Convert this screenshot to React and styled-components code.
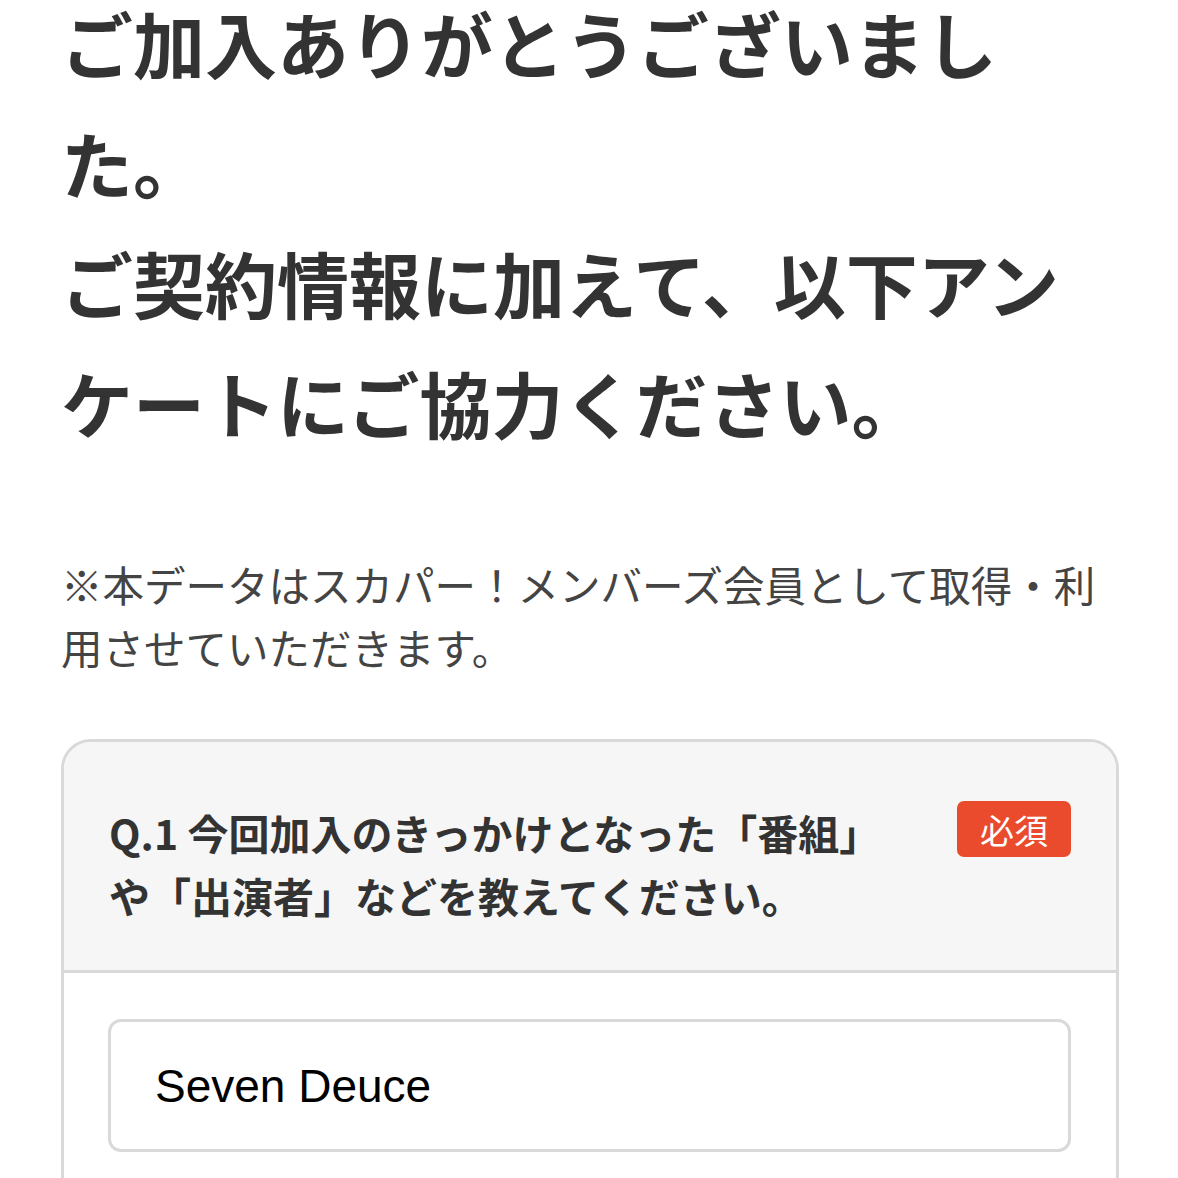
import React from "react";
import styled, { createGlobalStyle } from "styled-components";

const GlobalStyle = createGlobalStyle`
  html, body {
    margin: 0;
    padding: 0;
    background: #fff;
  }
  body {
    font-family: "Noto Sans CJK JP", "Noto Sans", sans-serif;
    color: #333;
    overflow: hidden;
    text-spacing-trim: space-all;
  }
`;

const Page = styled.main`
  width: 1058px;
  padding: 0 59px 0 61px;
`;

const Title = styled.h1`
  margin: -18px 0 0;
  font-size: 72px;
  line-height: 120px;
  font-weight: 700;
  color: #333;
  line-break: strict;
`;

const Note = styled.p`
  margin: 91px 0 0;
  font-size: 41.5px;
  line-height: 63px;
  font-weight: 400;
  color: #444;
`;

const Card = styled.section`
  margin-top: 60px;
  border: 3px solid #d9d9d9;
  border-radius: 30px;
  overflow: hidden;
  background: #fff;
`;

const CardHeader = styled.div`
  display: flex;
  justify-content: space-between;
  align-items: flex-start;
  gap: 40px;
  padding: 59px 45px 43px 45px;
  background: #f6f6f6;
  border-bottom: 3px solid #d9d9d9;
`;

const Question = styled.h2`
  margin: 0;
  width: 790px;
  font-size: 41px;
  line-height: 63px;
  font-weight: 700;
  color: #333;
`;

const Badge = styled.span`
  flex-shrink: 0;
  height: 56px;
  padding: 0 23px;
  display: flex;
  align-items: center;
  background: #ea4b2c;
  color: #fff;
  font-size: 34px;
  font-weight: 400;
  border-radius: 7px;
`;

const CardBody = styled.div`
  padding: 46px 45px 60px 44px;
`;

const TextInput = styled.input`
  box-sizing: border-box;
  width: 100%;
  height: 133px;
  padding: 0 44px;
  border: 3px solid #d9d9d9;
  border-radius: 13px;
  font-family: "Liberation Sans", Arial, sans-serif;
  font-size: 46px;
  color: #000;
  background: #fff;
  outline: none;
`;

export default function App() {
  return (
    <>
      <GlobalStyle />
      <Page>
        <Title>
          ご加入ありがとうございました。
          <br />
          ご契約情報に加えて、以下アンケートにご協力ください。
        </Title>
        <Note>
          ※本データはスカパー！メンバーズ会員として取得・利用させていただきます。
        </Note>
        <Card>
          <CardHeader>
            <Question>
              Q.1 今回加入のきっかけとなった「番組」や「出演者」などを教えてください。
            </Question>
            <Badge>必須</Badge>
          </CardHeader>
          <CardBody>
            <TextInput type="text" defaultValue="Seven Deuce" />
          </CardBody>
        </Card>
      </Page>
    </>
  );
}
